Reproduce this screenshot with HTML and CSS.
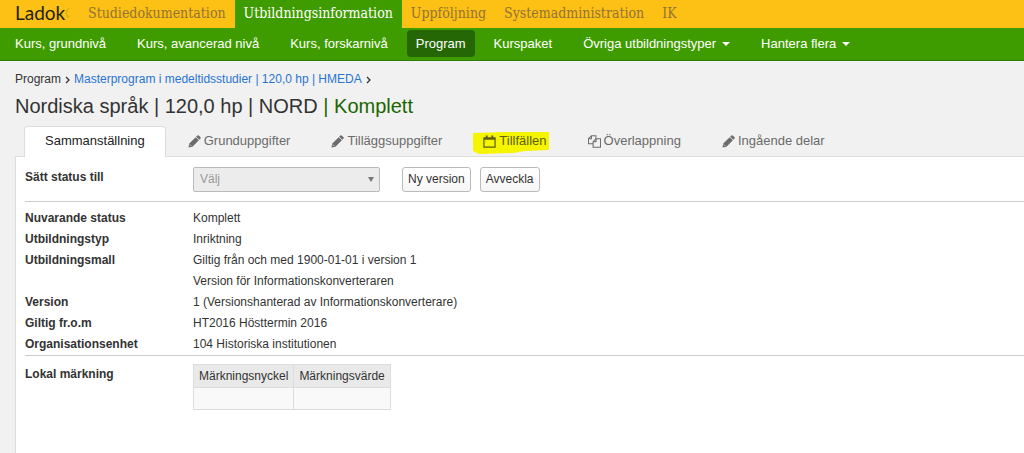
FILE: index.html
```html
<!DOCTYPE html>
<html lang="sv">
<head>
<meta charset="utf-8">
<meta name="viewport" content="width=device-width, initial-scale=1">
<title>Ladok – Nordiska språk</title>
<link rel="stylesheet" href="styles.css">
</head>
<body>
<svg class="sprite" aria-hidden="true">
  <symbol id="pencil" viewBox="0 0 14 14"><path d="M.5 13.500l.9-4.300L8.300 2.300l3.400 3.400-6.900 6.900zM8.800 1.800l1.300-1.300q.7-.6 1.400 0l2 2q.6.700 0 1.400l-1.300 1.300z" fill="currentColor"/><path d="M2 10.300l1.700 1.700" stroke="#eee" stroke-width=".8"/></symbol>
  <symbol id="calendar" viewBox="0 0 14 14"><path d="M1 3h12v10H1zM1 4.500h12" fill="none" stroke="currentColor" stroke-width="1.300"/><path d="M3 .5h2v3H3zM9 .5h2v3H9z" fill="currentColor"/></symbol>
  <symbol id="copy" viewBox="0 0 14 14"><path d="M5.500 9.500h-5V4L3.700.7h4.800V4M.5 4h3.200V.7M8.700 4h4.800v9.300h-8V7.200zM5.500 7.200h3.200V4" fill="none" stroke="currentColor" stroke-width="1.100"/></symbol>
</svg>
<header>
  <nav class="main-nav" aria-label="Huvudmeny">
    <a class="logo" href="#">Ladok<svg viewBox="0 0 4 12" aria-hidden="true"><path d="M3.500 1L1 6l2.500 5" fill="none" stroke="#c9a51b" stroke-width="1"/></svg></a>
    <a href="#">Studiedokumentation</a>
    <a class="active" href="#">Utbildningsinformation</a>
    <a href="#">Uppföljning</a>
    <a href="#">Systemadministration</a>
    <a href="#">IK</a>
  </nav>
  <nav class="sub-nav" aria-label="Undermeny">
    <a href="#">Kurs, grundnivå</a>
    <a href="#">Kurs, avancerad nivå</a>
    <a href="#">Kurs, forskarnivå</a>
    <a class="active" href="#">Program</a>
    <a href="#">Kurspaket</a>
    <button type="button" class="caret">Övriga utbildningstyper</button>
    <button type="button" class="caret">Hantera flera</button>
  </nav>
</header>
<main>
  <nav class="crumbs" aria-label="Sökväg"><span>Program</span><svg viewBox="0 0 5 8"><path d="M1 1l3 3-3 3"/></svg><a href="#">Masterprogram i medeltidsstudier | 120,0 hp | HMEDA</a><svg viewBox="0 0 5 8"><path d="M1 1l3 3-3 3"/></svg></nav>
  <h1>Nordiska språk | 120,0 hp | NORD <span>| Komplett</span></h1>
  <nav class="tabs" aria-label="Flikar">
    <a class="active" href="#">Sammanställning</a>
    <a href="#"><svg><use href="#pencil"/></svg>Grunduppgifter</a>
    <a href="#"><svg><use href="#pencil"/></svg>Tilläggsuppgifter</a>
    <a class="marked" href="#"><svg class="marker" viewBox="0 0 76 22" preserveAspectRatio="none" aria-hidden="true"><path d="M0 1L32 0H76V18L52 19 40 21 6 22 0 19z" fill="#f5f500"/></svg><svg><use href="#calendar"/></svg>Tillfällen</a>
    <a href="#"><svg><use href="#copy"/></svg>Överlappning</a>
    <a href="#"><svg><use href="#pencil"/></svg>Ingående delar</a>
  </nav>
  <section class="panel">
    <form class="row status">
      <label for="status">Sätt status till</label>
      <div class="controls">
        <span class="select"><select id="status" disabled><option>Välj</option></select></span>
        <button type="button">Ny version</button>
        <button type="button">Avveckla</button>
      </div>
    </form>
    <dl class="facts">
      <div class="row"><dt>Nuvarande status</dt><dd>Komplett</dd></div>
      <div class="row"><dt>Utbildningstyp</dt><dd>Inriktning</dd></div>
      <div class="row"><dt>Utbildningsmall</dt><dd>Giltig från och med 1900-01-01 i version 1<br>Version för Informationskonverteraren</dd></div>
      <div class="row"><dt>Version</dt><dd>1 (Versionshanterad av Informationskonverterare)</dd></div>
      <div class="row"><dt>Giltig fr.o.m</dt><dd>HT2016 Hösttermin 2016</dd></div>
      <div class="row"><dt>Organisationsenhet</dt><dd>104 Historiska institutionen</dd></div>
    </dl>
    <div class="row local">
      <h2 id="local">Lokal märkning</h2>
      <table aria-labelledby="local">
        <thead><tr><th>Märkningsnyckel</th><th>Märkningsvärde</th></tr></thead>
        <tbody><tr><td></td><td></td></tr></tbody>
      </table>
    </div>
  </section>
</main>
</body>
</html>
```
FILE: styles.css
```css
* { box-sizing: border-box; }
body {
  margin: 0;
  min-height: 100vh;
  display: flex;
  flex-direction: column;
  background: #f1f1f1;
  color: #333;
  font: 12px/21px "Liberation Sans", Arial, sans-serif;
}
a { color: inherit; text-decoration: none; }
button, select { font: inherit; color: inherit; }
.sprite { display: none; }

.main-nav {
  display: flex;
  height: 28px;
  background: #fdc014;
  color: #927336;
  font: 14px/26px "DejaVu Serif Condensed", "DejaVu Serif", serif;
}
.main-nav a { padding: 0 9px; white-space: nowrap; }
.main-nav .active { background: #3f9c00; color: #fff; }
.main-nav .logo {
  display: flex;
  align-items: center;
  width: 79px;
  padding: 0 0 3px 15px;
  color: #231f10;
  font: 19px/24px Lato, sans-serif;
}
.logo svg { width: 4px; height: 12px; }

.sub-nav {
  display: flex;
  align-items: center;
  gap: 7px;
  height: 33px;
  padding: 0 3px 1px;
  background: #3f9c00;
  border-bottom: 1px solid #2f7d00;
  color: #fff;
  font-size: 13px;
}
.sub-nav a, .sub-nav button {
  padding: 0 12px;
  border: 0;
  background: none;
  line-height: 27px;
  white-space: nowrap;
}
.sub-nav a.active { padding: 0 9px; border-radius: 4px; background: #256605; }
.caret::after {
  content: "";
  display: inline-block;
  margin-left: 6px;
  vertical-align: 2px;
  border: 4px solid transparent;
  border-top-color: #fff;
  border-bottom: 0;
}

main { flex: 1; display: flex; flex-direction: column; padding: 8px 0 0 15px; }
.crumbs { display: flex; align-items: center; gap: 4px; }
.crumbs a { color: #2a74d2; }
.crumbs svg { width: 5px; height: 8px; fill: none; stroke: #333; stroke-width: 1.3; }
h1 { margin: 0; font-size: 20px; line-height: 32px; font-weight: 400; }
h1 span { color: #1c6500; }

.tabs { display: flex; gap: 3px; margin: 4px 0 -1px 9px; color: #6b6b6b; font-size: 13px; line-height: 28px; }
.tabs a {
  position: relative;
  display: flex;
  align-items: center;
  gap: 3px;
  padding: 0 18px 2px;
  border: 1px solid transparent;
  border-bottom: 0;
  white-space: nowrap;
}
.tabs svg { width: 13px; height: 13px; }
.tabs .active { z-index: 1; padding: 0 20px 2px; background: #fff; border-color: #ddd; border-radius: 4px 4px 0 0; color: #222; }
.tabs .marked { color: #5d5d13; }
.tabs .marker { position: absolute; z-index: -1; left: 8px; top: 5px; width: 76px; height: 22px; }

.panel { flex: 1; padding: 10px 0 20px 9px; background: #fff; border: 1px solid #ddd; border-width: 1px 0 0 1px; }
.row { display: grid; grid-template-columns: 168px 1fr; }
.status { padding-bottom: 9px; border-bottom: 1px solid #ccc; }
label, dt, h2 { font-size: 12px; font-weight: 700; }
.controls { display: flex; gap: 9px; }
.select { position: relative; margin-right: 13px; }
.select::after {
  content: "";
  position: absolute;
  right: 6px;
  top: 10px;
  border: 3px solid transparent;
  border-top: 5px solid #777;
  border-bottom: 0;
}
select {
  appearance: none;
  width: 187px;
  height: 25px;
  padding: 0 6px;
  border: 1px solid #bbb;
  border-radius: 2px;
  background: #ececec;
  color: #999;
  opacity: 1;
}
.controls button {
  height: 25px;
  padding: 0 5px;
  border: 1px solid #bbb;
  border-radius: 3px;
  background: linear-gradient(#fff, #f6f6f6);
}
.facts { margin: 0; padding: 6px 0 0; border-bottom: 1px solid #ccc; }
dd { margin: 0; }
h2 { margin: 0; }
.local { padding-top: 8px; }
table { justify-self: start; border-collapse: collapse; background: #f9f9f9; }
th { padding: 0 5px; height: 23px; background: #e9e9e9; font-weight: 400; }
th, td { border: 1px solid #ddd; }
td { height: 22px; }
```
